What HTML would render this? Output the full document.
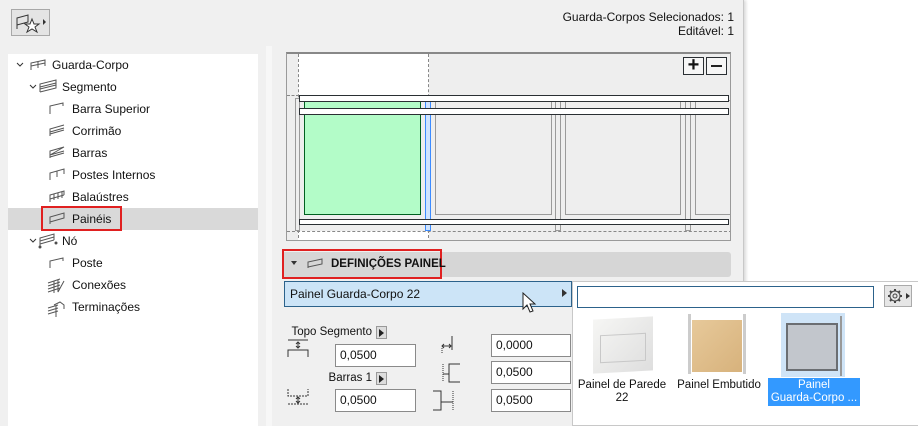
<!DOCTYPE html>
<html><head><meta charset="utf-8"><style>
*{box-sizing:border-box;margin:0;padding:0}
body{width:918px;height:426px;overflow:hidden;background:#fff;font-family:"Liberation Sans",sans-serif;font-size:12px;color:#111;position:relative}
.a{position:absolute;white-space:nowrap}
.panel{left:0;top:0;width:744px;height:426px;background:#f0f0f0;border-right:1px solid #c8c8c8;box-shadow:2px 0 3px rgba(0,0,0,.15)}
.tree{left:8px;top:54px;width:250px;height:372px;background:#fff}
.row{position:absolute;height:22px;line-height:22px;font-size:12px;white-space:nowrap}
.inp{position:absolute;background:#fff;border:1px solid #8a8a8a;height:23px;line-height:21px;padding-left:4px;font-size:12px}
.rail{position:absolute;background:#fff;border:1px solid #2a2f33}
.post{position:absolute;border:1px solid #9a9a9a;background:#eee}
.gp{position:absolute;border:1px solid #9a9a9a}
</style></head><body>
<div class="a panel"></div>
<div class="a" style="left:11px;top:9px;width:39px;height:27px;border:1px solid #a8a8a8;background:#e4e4e4"></div>
<svg class="a" style="left:14px;top:12px" width="34" height="22"><path d="M3 6 L14 3 V10 L3 13 Z M3 13 V17" fill="none" stroke="#333" stroke-width="1"/><path d="M18 7 L20 12 L25 12 L21 15 L23 20 L18 17 L13 20 L15 15 L11 12 L16 12 Z" fill="#fff" stroke="#333"/><path d="M29 7 L32 10 L29 13 Z" fill="#333"/></svg>
<div class="a" style="right:184px;top:10px;text-align:right;font-size:12px;line-height:14px">Guarda-Corpos Selecionados: 1<br>Editável: 1</div>
<div class="a tree"></div>
<div class="a" style="left:266px;top:46px;width:6px;height:380px;background:#f7f7f7"></div>
<div class="a" style="left:8px;top:208px;width:250px;height:22px;background:#d9d9d9"></div>
<div class="a" style="left:41px;top:206px;width:81px;height:25px;border:2px solid #e02020"></div>
<svg class="a" style="left:8px;top:54px" width="60" height="270" fill="none" stroke="#555" stroke-width="1">
<path d="M9 9 l3 3 l3 -3 M22 31 l3 3 l3 -3 M22 185 l3 3 l3 -3" stroke="#333"/>
<path d="M23 16 V9 L37 6 V12 M23 12 L37 9 M30 8 V14"/>
<path d="M32 38 V30 L48 26 V34 L32 38 M32 33 L48 29 M32 35 L48 31"/>
<path d="M42 60 V52 L55 49 V52"/>
<path d="M42 82 V75 L56 71 M42 78 L56 74 M42 80 L56 76"/>
<path d="M42 104 V97 L56 93 L42 101 L56 97 M42 103 L56 99"/>
<path d="M42 126 V119 L56 115 V120 M49 117 V123"/>
<path d="M42 148 V141 L56 137 V141 M46 140 V146 M50 139 V145 M54 138 V144 M42 145 L56 141"/>
<path d="M42 170 V163 L56 159 V164 L42 168"/>
<path d="M32 192 V184 L46 180 V186 M32 187 L46 183 M32 190 L46 186"/><circle cx="32" cy="193" r="1" fill="#333"/><circle cx="48" cy="189" r="1" fill="#333"/>
<path d="M42 214 V207 L55 204 V207"/>
<path d="M40 238 L52 234 M40 235 L52 231 M40 232 L52 228 M40 229 L52 225 M46 227 V239 M50 226 V238 L56 227"/>
<path d="M40 260 L50 257 M40 257 L50 254 M40 254 L50 251 M46 251 L52 248 L56 251 V255 M48 252 V263"/>
</svg>
<div class="row" style="left:52px;top:54px">Guarda-Corpo</div>
<div class="row" style="left:62px;top:76px">Segmento</div>
<div class="row" style="left:72px;top:98px">Barra Superior</div>
<div class="row" style="left:72px;top:120px">Corrimão</div>
<div class="row" style="left:72px;top:142px">Barras</div>
<div class="row" style="left:72px;top:164px">Postes Internos</div>
<div class="row" style="left:72px;top:186px">Balaústres</div>
<div class="row" style="left:72px;top:208px">Painéis</div>
<div class="row" style="left:62px;top:230px">Nó</div>
<div class="row" style="left:72px;top:252px">Poste</div>
<div class="row" style="left:72px;top:274px">Conexões</div>
<div class="row" style="left:72px;top:296px">Terminações</div>
<div class="a" style="left:286px;top:52px;width:445px;height:189px;background:#eeeeee;border:1px solid #9a9a9a;border-top:2px solid #888;overflow:hidden">
 <div class="a" style="left:11px;top:0;width:131px;height:41px;background:#fff"></div>
 <div class="a" style="left:11px;top:177px;width:131px;height:12px;background:#fff"></div>
 <div class="a" style="left:11px;top:0;height:189px;border-left:1px dashed #888"></div>
 <div class="a" style="left:141px;top:0;height:189px;border-left:1px dashed #888"></div>
 <div class="a" style="left:0;top:41px;width:12px;border-top:1px dashed #888"></div>
 <div class="a" style="left:0;top:177px;width:445px;border-top:1px dashed #888"></div>
 <div class="post" style="left:8px;top:44px;width:5px;height:133px"></div>
 <div class="a" style="left:17px;top:46px;width:117px;height:115px;background:#b3fcc8;border:1px solid #006020"></div>
 <div class="a" style="left:138px;top:46px;width:6px;height:131px;background:#cfe4ff;border:1px solid #3b8bff"></div>
 <div class="gp" style="left:148px;top:46px;width:117px;height:115px"></div>
 <div class="gp" style="left:278px;top:46px;width:116px;height:115px"></div>
 <div class="gp" style="left:408px;top:46px;width:40px;height:115px"></div>
 <div class="post" style="left:268px;top:46px;width:6px;height:131px"></div>
 <div class="post" style="left:398px;top:46px;width:6px;height:131px"></div>
 <div class="rail" style="left:12px;top:41px;width:430px;height:7px"></div>
 <div class="rail" style="left:12px;top:54px;width:430px;height:7px"></div>
 <div class="rail" style="left:12px;top:165px;width:430px;height:6px"></div>
 <div class="a" style="left:396px;top:3px;width:21px;height:18px;border:1px solid #2a2f33;background:#f6f6f6;font-size:20px;line-height:15px;text-align:center;font-weight:bold">+</div>
 <div class="a" style="left:419px;top:3px;width:21px;height:18px;border:1px solid #2a2f33;background:#f6f6f6"><div class="a" style="left:4px;top:7px;width:11px;height:2px;background:#222"></div></div>
</div>
<div class="a" style="left:282px;top:252px;width:449px;height:25px;background:#d6d6d6;border-radius:3px"></div>
<div class="a" style="left:282px;top:249px;width:160px;height:30px;border:2px solid #e02020"></div>
<svg class="a" style="left:290px;top:256px" width="36" height="16"><path d="M1 5 L7 5 L4 9 Z" fill="#333"/><path d="M18 12 V6 L32 3 V8 L18 11" fill="none" stroke="#555"/></svg>
<div class="a" style="left:331px;top:258px;font-weight:bold;font-size:11.5px">DEFINIÇÕES PAINEL</div>
<div class="a" style="left:284px;top:281px;width:288px;height:26px;background:#cce4f7;border:1px solid #2c628b;padding-left:5px;line-height:24px">Painel Guarda-Corpo 22</div>
<svg class="a" style="left:561px;top:288px" width="8" height="10"><path d="M1 1 L6 5 L1 9Z" fill="#333"/></svg>
<svg class="a" style="left:522px;top:292px" width="16" height="22"><path d="M1 1 V17 L5 13 L8 20 L11 19 L8 12 L13 12 Z" fill="#fff" stroke="#222"/></svg>
<div class="a" style="left:270px;top:326px;width:102px;text-align:right;font-size:11.5px">Topo Segmento</div>
<div class="a" style="left:376px;top:326px;width:11px;height:13px;background:#ddd;border:1px solid #999"></div>
<svg class="a" style="left:378px;top:329px" width="8" height="8"><path d="M1 0 L6 4 L1 8Z" fill="#222"/></svg>
<div class="a" style="left:300px;top:372px;width:72px;text-align:right;font-size:11.5px">Barras 1</div>
<div class="a" style="left:376px;top:372px;width:11px;height:13px;background:#ddd;border:1px solid #999"></div>
<svg class="a" style="left:378px;top:375px" width="8" height="8"><path d="M1 0 L6 4 L1 8Z" fill="#222"/></svg>
<div class="inp" style="left:335px;top:344px;width:81px">0,0500</div>
<div class="inp" style="left:335px;top:389px;width:81px">0,0500</div>
<div class="inp" style="left:491px;top:334px;width:80px">0,0000</div>
<div class="inp" style="left:491px;top:361px;width:80px">0,0500</div>
<div class="inp" style="left:491px;top:389px;width:80px">0,0500</div>
<svg class="a" style="left:286px;top:334px" width="190" height="80" fill="none" stroke="#333" stroke-width="1">
<path d="M2 6 H22 M2 23 V16 H22 V23" /><path d="M12 8 V14 M10 10 L12 8 L14 10 M10 12 L12 14 L14 12"/>
<path d="M2 55 V62 H22 V55 M2 70 H22" stroke-dasharray="2 1"/><path d="M12 63 V69 M10 65 L12 63 L14 65 M10 67 L12 69 L14 67"/>
<path d="M166 2 V16 M156 12 H165 M158 10 L156 12 L158 14 M163 10 L165 12 L163 14"/><path d="M156 14 V20" stroke-dasharray="1 1"/>
<path d="M174 30 H163 V48 H174" /><path d="M157 30 V48" stroke-dasharray="1 1"/><path d="M157 40 H163"/>
<path d="M147 57 H155 V76 H147" /><path d="M167 57 V76" stroke-dasharray="1 1"/><path d="M155 68 H167"/>
</svg>
<div class="a" style="left:572px;top:281px;width:346px;height:145px;background:#fff;border:1px solid #c8c8c8;border-right:none"></div>
<div class="a" style="left:577px;top:286px;width:297px;height:22px;border:1px solid #2c628b;background:#fff"></div>
<div class="a" style="left:884px;top:285px;width:28px;height:22px;border:1px solid #aaa;background:#e6e6e6"></div>
<svg class="a" style="left:886px;top:287px" width="26" height="18"><circle cx="9" cy="9" r="5" fill="none" stroke="#444"/><circle cx="9" cy="9" r="2" fill="none" stroke="#444"/><path d="M9 2 V4 M9 14 V16 M2 9 H4 M14 9 H16 M4 4 L5.5 5.5 M12.5 12.5 L14 14 M4 14 L5.5 12.5 M12.5 5.5 L14 4" stroke="#444" stroke-width="2"/><path d="M20 6 L24 9 L20 12Z" fill="#333"/></svg>
<div class="a" style="left:593px;top:318px;width:60px;height:54px;background:linear-gradient(135deg,#f6f6f4,#dedede);transform:skewY(-3deg)"><div class="a" style="left:7px;top:16px;width:46px;height:28px;border:1px solid #c8c8c8"></div></div>
<div class="a" style="left:688px;top:314px;width:3px;height:60px;background:#ccc"></div>
<div class="a" style="left:743px;top:314px;width:3px;height:60px;background:#ccc"></div>
<div class="a" style="left:692px;top:320px;width:50px;height:52px;background:linear-gradient(135deg,#e7c99a,#d7b27c)"></div>
<div class="a" style="left:781px;top:313px;width:64px;height:64px;background:#cfe4f7"></div>
<div class="a" style="left:786px;top:323px;width:52px;height:48px;background:#c2c6cc;border:2px solid #6b6e72"></div>
<div class="a" style="left:840px;top:316px;width:2px;height:60px;background:#999"></div>
<div class="a" style="left:768px;top:378px;width:92px;height:28px;background:#3399ff"></div>
<div class="a" style="left:572px;top:379px;width:100px;text-align:center;line-height:13px;font-size:11.5px">Painel de Parede<br>22</div>
<div class="a" style="left:670px;top:379px;width:98px;text-align:center;line-height:13px;font-size:11.5px">Painel Embutido</div>
<div class="a" style="left:764px;top:379px;width:100px;text-align:center;line-height:13px;color:#fff;font-size:11.5px">Painel<br>Guarda-Corpo ...</div>
</body></html>
